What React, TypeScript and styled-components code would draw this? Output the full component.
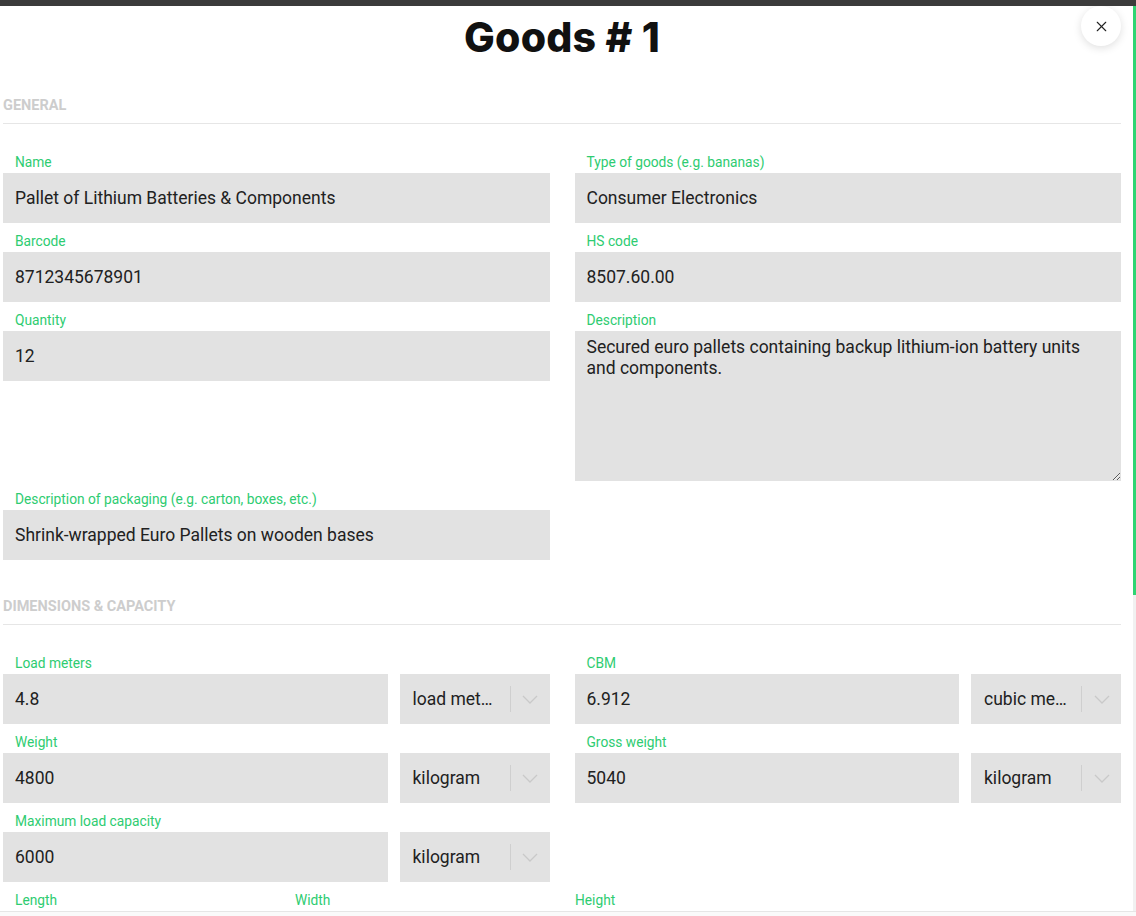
import React from "react";
import styled, { createGlobalStyle } from "styled-components";
import { X } from "lucide-react";

const GlobalStyle = createGlobalStyle`
  html, body {
    margin: 0;
    padding: 0;
    height: 100%;
    overflow: hidden;
    background: #fff;
  }
  body {
    font-family: Roboto, "Liberation Sans", Arial, sans-serif;
    color: #212121;
  }
  * {
    box-sizing: border-box;
  }
`;

const Screen = styled.div`
  height: 100vh;
  display: flex;
  flex-direction: column;
`;

const TopBar = styled.div`
  flex: none;
  height: 6px;
  background: #3b3b3b;
`;

const Body = styled.div`
  flex: none;
  height: 905px;
  display: flex;
`;

const Scroller = styled.div`
  flex: 1;
  min-width: 0;
  overflow: hidden;
  padding: 0 12px 0 3px;
`;

const ScrollRail = styled.div`
  flex: none;
  width: 3px;
  background: #f1f1f1;
`;

const ScrollThumb = styled.div`
  height: 589px;
  background: #2ed573;
`;

const Footer = styled.div`
  flex: none;
  height: 64px;
  border-top: 1px solid #e6e6e6;
  background: #fafafa;
`;

const Header = styled.div`
  position: relative;
  padding-top: 7px;
  text-align: center;
`;

const Title = styled.h1`
  margin: 0;
  font-family: Inter, "Noto Sans", sans-serif;
  font-weight: 800;
  font-size: 41px;
  line-height: 49px;
  letter-spacing: 0.2px;
  color: #111;
`;

const CloseButton = styled.button`
  position: absolute;
  top: 0;
  right: 0;
  width: 40px;
  height: 40px;
  border: none;
  border-radius: 50%;
  background: #fff;
  box-shadow: 0 2px 8px rgba(0, 0, 0, 0.13);
  display: flex;
  align-items: center;
  justify-content: center;
  color: #222;
  cursor: pointer;
  padding: 0;
`;

const Section = styled.section<{ $top: number }>`
  margin-top: ${(p) => p.$top}px;
`;

const SectionTitle = styled.h2`
  margin: 0 0 30px;
  padding-bottom: 9px;
  border-bottom: 1px solid #e6e6e6;
  font-size: 14.5px;
  line-height: 16px;
  font-weight: 700;
  color: #cdcdcd;
  text-transform: uppercase;
`;

const TwoCols = styled.div`
  display: grid;
  grid-template-columns: 1fr 1fr;
  column-gap: 25px;
  row-gap: 10px;
  align-items: start;
`;

const MeasureCols = styled.div`
  display: grid;
  grid-template-columns: 268px 268px 268px 1fr;
  column-gap: 12px;
  margin-top: 10px;
`;

const Field = styled.div`
  min-width: 0;
`;

const Label = styled.label`
  display: block;
  padding-left: 12px;
  margin-bottom: 3px;
  font-size: 13.75px;
  line-height: 16px;
  color: #2ecc71;
`;

const TextInput = styled.input`
  display: block;
  width: 100%;
  height: 50px;
  border: none;
  border-radius: 0;
  outline: none;
  background: #e2e2e2;
  padding: 0 12px;
  font-family: Roboto, "Liberation Sans", sans-serif;
  font-size: 17.5px;
  color: #212121;
`;

const TextArea = styled.textarea`
  display: block;
  width: 100%;
  height: 150px;
  border: none;
  border-radius: 0;
  outline: none;
  background: #e2e2e2;
  padding: 6px 12px;
  font-family: Roboto, "Liberation Sans", sans-serif;
  font-size: 17.5px;
  line-height: 21px;
  color: #212121;
  resize: vertical;
`;

const UnitRow = styled.div`
  display: flex;
  gap: 12px;
`;

const Select = styled.div`
  flex: none;
  width: 150px;
  height: 50px;
  background: #e2e2e2;
  display: flex;
  align-items: center;
`;

const SelectValue = styled.div`
  flex: 1;
  min-width: 0;
  padding: 0 10px 0 13px;
  font-size: 17.5px;
  white-space: nowrap;
  overflow: hidden;
  text-overflow: ellipsis;
  color: #212121;
`;

const Separator = styled.span`
  flex: none;
  width: 1px;
  height: 26px;
  background: #cfcfcf;
`;

const Indicator = styled.span`
  flex: none;
  width: 39px;
  display: flex;
  justify-content: center;
  align-items: center;
  color: #c9c9c9;
`;

const noop = () => {};

function Chevron() {
  return (
    <svg width="16" height="9" viewBox="0 0 16 9" fill="none">
      <polyline points="1,1 8,8 15,1" stroke="currentColor" strokeWidth="1.3" />
    </svg>
  );
}

function InputField({ label, value }: { label: string; value: string }) {
  return (
    <Field>
      <Label>{label}</Label>
      <TextInput value={value} onChange={noop} />
    </Field>
  );
}

function UnitField({ label, value, unit }: { label: string; value: string; unit: string }) {
  return (
    <Field>
      <Label>{label}</Label>
      <UnitRow>
        <TextInput value={value} onChange={noop} />
        <Select>
          <SelectValue>{unit}</SelectValue>
          <Separator />
          <Indicator>
            <Chevron />
          </Indicator>
        </Select>
      </UnitRow>
    </Field>
  );
}

export default function App() {
  return (
    <Screen>
      <GlobalStyle />
      <TopBar />
      <Body>
        <Scroller>
          <Header>
            <Title>Goods # 1</Title>
            <CloseButton aria-label="Close">
              <X size={17} strokeWidth={1.6} />
            </CloseButton>
          </Header>

          <Section $top={36}>
            <SectionTitle>General</SectionTitle>
            <TwoCols>
              <InputField label="Name" value="Pallet of Lithium Batteries & Components" />
              <InputField label="Type of goods (e.g. bananas)" value="Consumer Electronics" />
              <InputField label="Barcode" value="8712345678901" />
              <InputField label="HS code" value="8507.60.00" />
              <InputField label="Quantity" value="12" />
              <Field>
                <Label>Description</Label>
                <TextArea
                  value="Secured euro pallets containing backup lithium-ion battery units and components."
                  onChange={noop}
                />
              </Field>
              <InputField
                label="Description of packaging (e.g. carton, boxes, etc.)"
                value="Shrink-wrapped Euro Pallets on wooden bases"
              />
            </TwoCols>
          </Section>

          <Section $top={39}>
            <SectionTitle>Dimensions &amp; capacity</SectionTitle>
            <TwoCols>
              <UnitField label="Load meters" value="4.8" unit="load meters" />
              <UnitField label="CBM" value="6.912" unit="cubic meters" />
              <UnitField label="Weight" value="4800" unit="kilogram" />
              <UnitField label="Gross weight" value="5040" unit="kilogram" />
              <UnitField label="Maximum load capacity" value="6000" unit="kilogram" />
            </TwoCols>
            <MeasureCols>
              <InputField label="Length" value="1.2" />
              <InputField label="Width" value="0.8" />
              <InputField label="Height" value="1.8" />
            </MeasureCols>
          </Section>
        </Scroller>
        <ScrollRail>
          <ScrollThumb />
        </ScrollRail>
      </Body>
      <Footer />
    </Screen>
  );
}
